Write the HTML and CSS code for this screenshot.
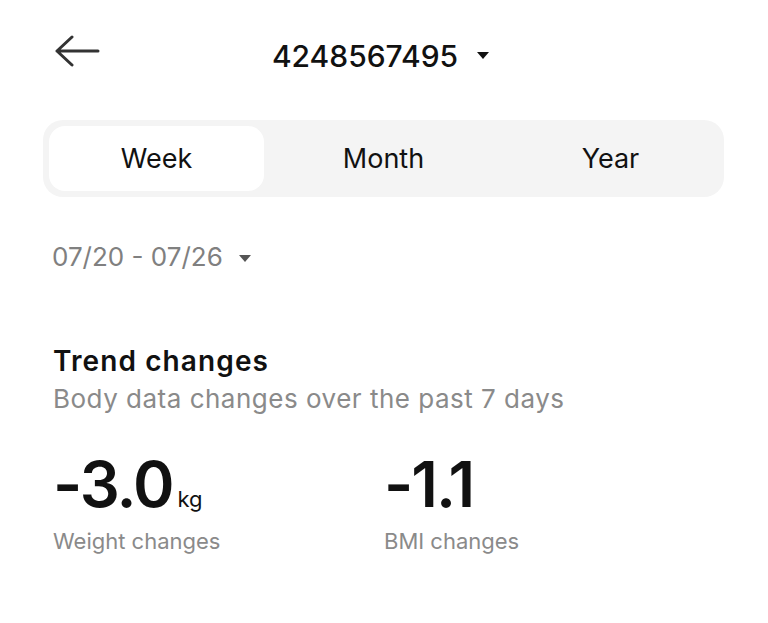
FILE: index.html
```html
<!DOCTYPE html>
<html>
<head>
<meta charset="utf-8">
<link rel="stylesheet" href="styles.css">
</head>
<body>
<div class="page">
  <header class="header">
    <svg class="back" width="46" height="32" viewBox="0 0 46 32">
      <path d="M18 2 L3 16 L18 30 M3 16 H44" fill="none" stroke="#333" stroke-width="3" stroke-linecap="round" stroke-linejoin="round"/>
    </svg>
    <div class="title">
      <span>4248567495</span>
      <span class="tri"></span>
    </div>
  </header>
  <div class="seg">
    <div class="seg-item active">Week</div>
    <div class="seg-item">Month</div>
    <div class="seg-item">Year</div>
  </div>
  <div class="range">
    <span>07/20 - 07/26</span>
    <span class="tri tri-gray"></span>
  </div>
  <section class="trend">
    <h2 class="trend-title">Trend changes</h2>
    <p class="trend-sub">Body data changes over the past 7 days</p>
    <div class="stats">
      <div class="stat">
        <div class="value">-3.0<span class="unit">kg</span></div>
        <div class="label">Weight changes</div>
      </div>
      <div class="stat">
        <div class="value">-1.1</div>
        <div class="label">BMI changes</div>
      </div>
    </div>
  </section>
</div>
</body>
</html>
```
FILE: styles.css
```css
* { box-sizing: border-box; }
html, body { margin: 0; padding: 0; background: #fff; }
body {
  font-family: "Inter", "Noto Sans", sans-serif;
  color: #111;
  width: 768px;
  height: 623px;
  overflow: hidden;
}
.page { padding: 0 44px 0 43px; }
.header {
  position: relative;
  height: 110px;
  display: flex;
  align-items: center;
  justify-content: center;
}
.back { position: absolute; left: 11px; top: 35px; }
.title {
  display: flex;
  align-items: center;
  gap: 19px;
  font-size: 30px;
  font-weight: 550;
  margin-left: -6px;
  margin-top: 1px;
}
.tri {
  width: 0; height: 0;
  border-left: 6.5px solid transparent;
  border-right: 6.5px solid transparent;
  border-top: 7px solid #111;
}
.tri-gray { border-top-color: #555; margin-left: 16px; margin-top: 2px; }
.seg {
  margin-top: 10px;
  background: #f4f4f4;
  border-radius: 20px;
  padding: 6px;
  display: grid;
  grid-template-columns: 1fr 1fr 1fr;
  column-gap: 12px;
  height: 77px;
}
.seg-item {
  display: flex;
  align-items: center;
  justify-content: center;
  font-size: 27px;
  color: #111;
  border-radius: 16px;
}
.seg-item.active { background: #fff; }
.range {
  margin-top: 43px;
  margin-left: 9px;
  display: flex;
  align-items: center;
  font-size: 26px;
  line-height: 34px;
  color: #808080;
  height: 34px;
}
.trend { margin-left: 10px; margin-top: 69px; }
.trend-title {
  margin: 0;
  font-size: 28px;
  font-weight: 600;
  letter-spacing: 1.1px;
  line-height: 36px;
}
.trend-sub {
  margin: 3px 0 0;
  font-size: 26px;
  letter-spacing: 0.5px;
  color: #8a8a8a;
  line-height: 34px;
}
.stats { display: flex; margin-top: 32px; }
.stat { width: 331px; }
.value {
  font-size: 63px;
  font-weight: 600;
  line-height: 72px;
  height: 72px;
  letter-spacing: -2px;
}
.unit {
  font-size: 22px;
  font-weight: 400;
  margin-left: 5px;
  letter-spacing: 0;
  line-height: 0;
}
.label {
  margin-top: 6px;
  font-size: 22px;
  color: #8a8a8a;
  line-height: 30px;
}
```
